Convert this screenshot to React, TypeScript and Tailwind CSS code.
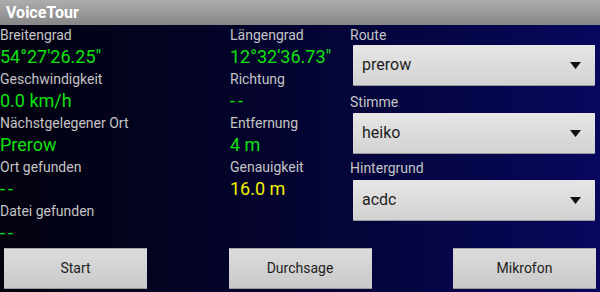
import React from "react";

type Field = { label: string; value: string; color?: string };

const col1: Field[] = [
  { label: "Breitengrad", value: "54°27'26.25\"" },
  { label: "Geschwindigkeit", value: "0.0 km/h" },
  { label: "Nächstgelegener Ort", value: "Prerow" },
  { label: "Ort gefunden", value: "--" },
  { label: "Datei gefunden", value: "--" },
];

const col2: Field[] = [
  { label: "Längengrad", value: "12°32'36.73\"" },
  { label: "Richtung", value: "--" },
  { label: "Entfernung", value: "4 m" },
  { label: "Genauigkeit", value: "16.0 m", color: "text-[#f0f000]" },
];

function InfoColumn({ fields, width }: { fields: Field[]; width: string }) {
  return (
    <div className={`flex flex-col ${width}`}>
      {fields.map((f) => (
        <div key={f.label} className="flex flex-col">
          <div className="h-[20px] leading-[20px] text-[14px] text-[#c4c4c4]">{f.label}</div>
          <div
            className={`h-[24px] leading-[24px] text-[18px] ${f.color ?? "text-[#10e010]"} ${
              f.value === "--" ? "tracking-[3px]" : ""
            }`}
          >
            {f.value}
          </div>
        </div>
      ))}
    </div>
  );
}

function Spinner({ value }: { value: string }) {
  return (
    <div className="ml-[3px] h-[41px] flex items-center justify-between pl-[9px] pr-[14px] bg-gradient-to-b from-[#e6e6e6] to-[#d2d2d2] border-b border-[#9a9a9a] rounded-[1px]">
      <span className="text-[16px] text-[#1e1e1e]">{value}</span>
      <svg width="11" height="7" viewBox="0 0 11 7">
        <polygon points="0,0 11,0 5.5,7" fill="#111" />
      </svg>
    </div>
  );
}

function Button({ label }: { label: string }) {
  return (
    <div className="w-[143px] h-[41px] flex items-center justify-center bg-gradient-to-b from-[#dcdcdc] to-[#c9c9c9] border-t border-[#a8a8a8] border-b border-b-[#9a9a9a] text-[14px] text-[#1e1e1e]">
      {label}
    </div>
  );
}

export default function App() {
  return (
    <div
      className="w-[600px] h-[292px] overflow-hidden flex flex-col bg-gradient-to-r from-[#02020f] via-[#040432] to-[#07075e]"
      style={{ fontFamily: "Roboto, 'Noto Sans', sans-serif" }}
    >
      <div className="h-[25px] shrink-0 flex items-center px-[6px] bg-gradient-to-b from-[#adadad] to-[#878787]">
        <span className="text-[16px] font-bold text-white">VoiceTour</span>
      </div>

      <div className="flex">
        <InfoColumn fields={col1} width="w-[230px]" />
        <InfoColumn fields={col2} width="w-[120px]" />
        <div className="flex flex-col w-[245px]">
          <div className="h-[20px] leading-[20px] text-[14px] text-[#c4c4c4]">Route</div>
          <Spinner value="prerow" />
          <div className="mt-[6px] h-[20px] leading-[20px] text-[14px] text-[#c4c4c4]">Stimme</div>
          <div className="mt-[1px]">
            <Spinner value="heiko" />
          </div>
          <div className="mt-[4px] h-[20px] leading-[20px] text-[14px] text-[#c4c4c4]">Hintergrund</div>
          <div className="mt-[2px]">
            <Spinner value="acdc" />
          </div>
        </div>
      </div>

      <div className="flex justify-between px-[4px] mt-[3px]">
        <Button label="Start" />
        <Button label="Durchsage" />
        <Button label="Mikrofon" />
      </div>
    </div>
  );
}
